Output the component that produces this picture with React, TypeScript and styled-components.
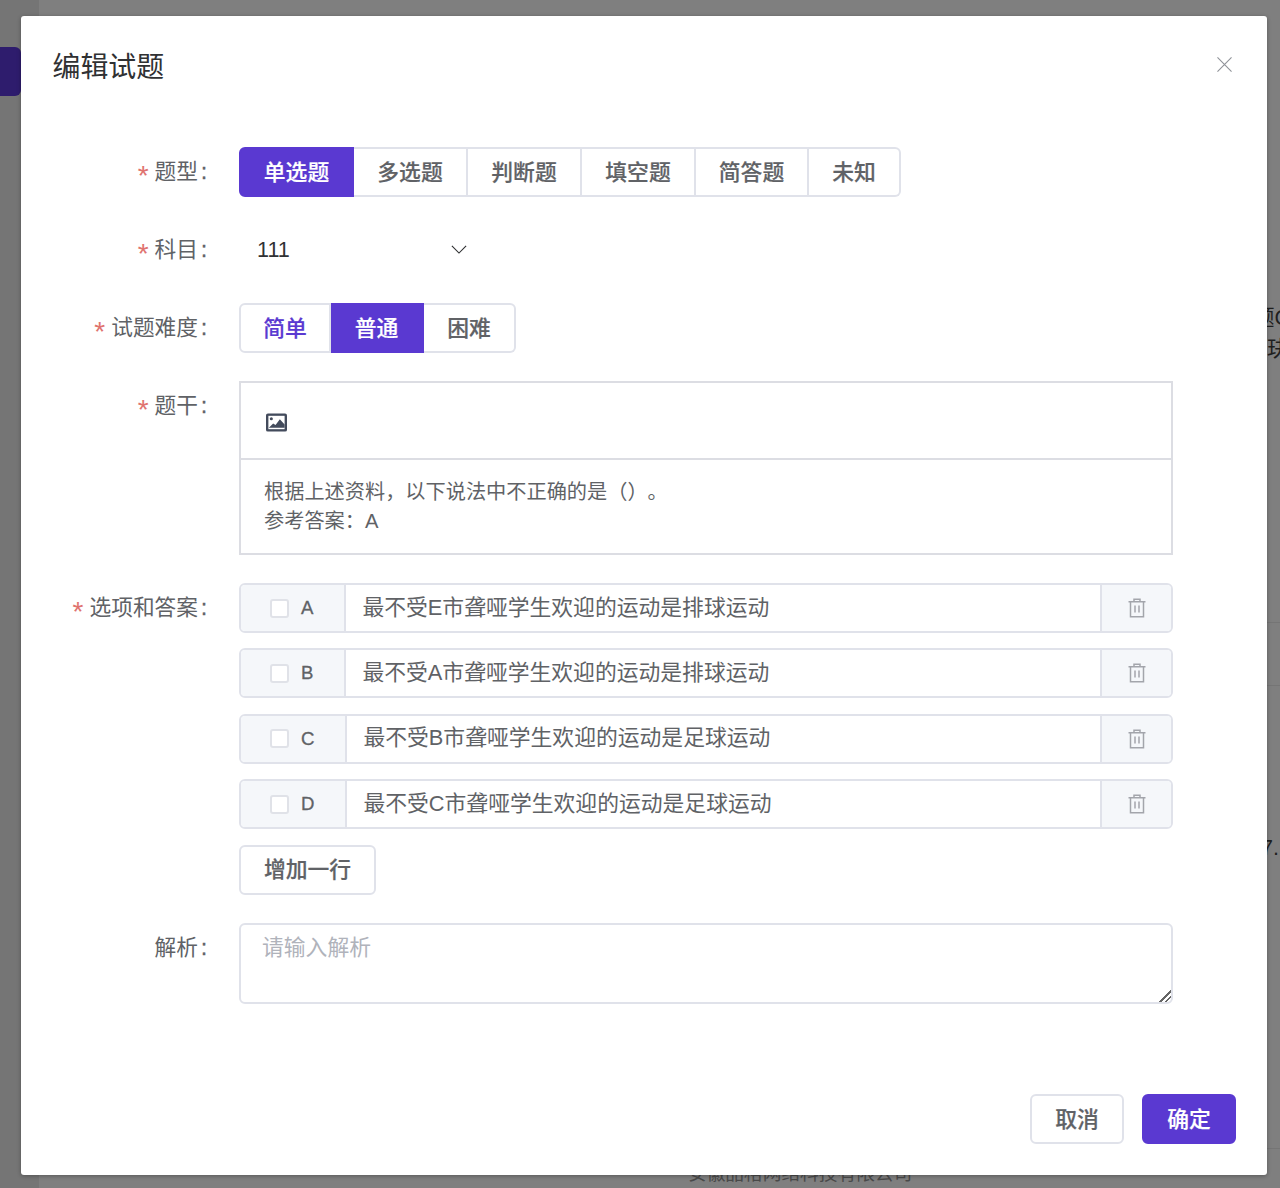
import React from "react";
import styled, { createGlobalStyle } from "styled-components";

const Global = createGlobalStyle`
  html, body { margin: 0; padding: 0; background: #7f7f7f; }
  * { box-sizing: border-box; }
  body {
    font-family: "Liberation Sans", "Noto Sans CJK SC", sans-serif;
    text-spacing-trim: space-all;
  }
`;

const line = "#e0e2ea";
const purple = "#5a39d1";
const fontStack = `"Liberation Sans", "Noto Sans CJK SC", sans-serif`;

const Page = styled.div`
  position: relative;
  width: 1280px;
  height: 1188px;
  overflow: hidden;
  background: #7f7f7f;
`;
const SideRail = styled.div`
  position: absolute;
  left: 0;
  top: 0;
  bottom: 0;
  width: 39px;
  background: #757575;
`;
const SideTab = styled.div`
  position: absolute;
  left: 0;
  top: 47px;
  width: 21px;
  height: 49px;
  border-radius: 0 6px 6px 0;
  background: #2e1c6d;
`;
const BackText = styled.div<{ $x: number; $y: number }>`
  position: absolute;
  left: ${(p) => p.$x}px;
  top: ${(p) => p.$y}px;
  font-size: 21.6px;
  line-height: 26px;
  color: #1f1f1f;
  white-space: nowrap;
`;
const Footnote = styled.div`
  position: absolute;
  left: 688px;
  top: 1161px;
  font-size: 18.7px;
  line-height: 26px;
  color: #4a4a4a;
  white-space: nowrap;
`;
const RuleLine = styled.div<{ $y: number }>`
  position: absolute;
  right: 0;
  width: 13px;
  top: ${(p) => p.$y}px;
  height: 1px;
  background: #757575;
`;

const Modal = styled.div`
  position: absolute;
  left: 21px;
  top: 16px;
  width: 1246px;
  height: 1159px;
  background: #fff;
  border-radius: 3px;
  box-shadow: 0 1px 4px rgba(0, 0, 0, 0.3);
  display: flex;
  flex-direction: column;
`;
const Header = styled.div`
  display: flex;
  align-items: flex-start;
  justify-content: space-between;
  padding: 32px 35px 0 31.5px;
  height: 131px;
`;
const Title = styled.h2`
  margin: 0;
  font-size: 27.9px;
  line-height: 40px;
  font-weight: 400;
  color: #303133;
`;
const CloseButton = styled.button`
  border: 0;
  background: none;
  padding: 0;
  margin-top: 9px;
  width: 15px;
  height: 15px;
  display: block;
`;
const Form = styled.div`
  display: flex;
  flex-direction: column;
  gap: 28px;
  padding-right: 94px;
  flex: 1;
`;
const Row = styled.div`
  display: grid;
  grid-template-columns: 218px 934px;
`;
const Label = styled.div`
  display: flex;
  justify-content: flex-end;
  padding-right: 32px;
  font-size: 21.7px;
  line-height: 50px;
  height: 50px;
  color: #606266;
  white-space: nowrap;
`;
const Star = styled.span`
  color: #e0736f;
  margin-right: 6px;
  font-size: 28px;
  line-height: 57px;
  height: 50px;
`;
const Colon = styled.span`
  margin-left: 3px;
  -webkit-text-stroke: 0.4px currentColor;
`;
const Segments = styled.div`
  display: flex;
  height: 50px;
`;
const Segment = styled.button<{ $active?: boolean; $accent?: boolean; $w: number }>`
  width: ${(p) => p.$w}px;
  height: 50px;
  padding: 1px 0 0;
  font: 500 21.8px/44px ${fontStack};
  -webkit-text-stroke: 0.2px currentColor;
  background: ${(p) => (p.$active ? purple : "#fff")};
  color: ${(p) => (p.$active ? "#fff" : p.$accent ? purple : "#606266")};
  border: 2px solid ${(p) => (p.$active ? purple : line)};
  border-left-width: 0;
  &:first-child {
    border-left-width: 2px;
    border-radius: 6px 0 0 6px;
  }
  &:last-child {
    border-radius: 0 6px 6px 0;
  }
`;
const SelectBox = styled.div`
  width: 246px;
  height: 50px;
  display: flex;
  align-items: center;
  justify-content: space-between;
  padding: 0 18px;
  font-size: 21.6px;
  color: #303133;
`;
const Chevron = styled.svg`
  margin-bottom: 2px;
`;
const Editor = styled.div`
  border: 2px solid #dcdde3;
  height: 174px;
  display: flex;
  flex-direction: column;
`;
const EditorToolbar = styled.div`
  height: 77px;
  flex: none;
  border-bottom: 2px solid #dcdde3;
  display: flex;
  align-items: center;
  padding: 3px 0 0 25px;
`;
const EditorBody = styled.div`
  padding: 18px 23px 0;
  font-size: 20.2px;
  line-height: 29px;
  color: #606266;
`;
const Options = styled.div`
  display: flex;
  flex-direction: column;
  gap: 15.4px;
`;
const OptionRow = styled.div`
  display: flex;
  height: 50px;
  border: 2px solid ${line};
  border-radius: 6px;
  overflow: hidden;
`;
const OptionKey = styled.label`
  display: flex;
  align-items: center;
  gap: 12px;
  padding: 0 31px 0 29px;
  background: #f5f7fa;
  border-right: 2px solid ${line};
  font-size: 18.6px;
  -webkit-text-stroke: 0.3px currentColor;
  color: #606266;
`;
const Check = styled.span`
  width: 19px;
  height: 19px;
  border: 2px solid #e0e2e8;
  border-radius: 3px;
  background: #fff;
`;
const OptionInput = styled.input`
  flex: 1;
  min-width: 0;
  border: 0;
  outline: 0;
  padding: 0 16px 1px;
  font: 400 21.8px/30px ${fontStack};
  color: #606266;
  background: #fff;
`;
const DeleteCell = styled.div`
  width: 71px;
  display: flex;
  align-items: center;
  justify-content: center;
  background: #f5f7fa;
  border-left: 2px solid ${line};
`;
const AddButton = styled.button`
  align-self: flex-start;
  width: 137px;
  height: 50px;
  padding: 1px 0 0;
  background: #fff;
  border: 2px solid ${line};
  border-radius: 6px;
  font: 500 21.8px/44px ${fontStack};
  -webkit-text-stroke: 0.2px currentColor;
  color: #606266;
`;
const Textarea = styled.textarea`
  display: block;
  width: 934px;
  height: 81px;
  padding: 8px 21px;
  border: 2px solid ${line};
  border-radius: 6px;
  outline: 0;
  font: 400 21.8px/30px ${fontStack};
  color: #606266;
  &::placeholder {
    color: #b0b3bb;
  }
  &::-webkit-resizer {
    background: linear-gradient(
      135deg,
      transparent 0 60%,
      #666 60% 67%,
      transparent 67% 79%,
      #666 79% 86%,
      transparent 86%
    );
  }
`;
const Footer = styled.div`
  display: flex;
  justify-content: flex-end;
  gap: 18px;
  padding: 0 31px 31px 0;
`;
const FooterButton = styled.button<{ $primary?: boolean }>`
  width: 94px;
  height: 50px;
  padding: 1px 0 0;
  border-radius: 6px;
  font: 500 21.8px/44px ${fontStack};
  -webkit-text-stroke: 0.2px currentColor;
  background: ${(p) => (p.$primary ? purple : "#fff")};
  color: ${(p) => (p.$primary ? "#fff" : "#606266")};
  border: 2px solid ${(p) => (p.$primary ? purple : line)};
`;

const TrashIcon = () => (
  <svg width="20" height="20" viewBox="0 0 20 20" fill="none" stroke="#a3a5ab" strokeWidth="1.5">
    <path d="M1.500 3.700h17" />
    <path d="M7 3.500V1.200h6v2.300" />
    <path d="M3.500 3.700v15h13v-15" />
    <path d="M8 7.500v7M12 7.500v7" />
  </svg>
);

const ImageIcon = () => (
  <svg width="21" height="19" viewBox="0 0 22 19">
    <rect width="22" height="19" rx="2" fill="#434b5c" />
    <rect x="2.500" y="2.500" width="17" height="14" fill="#fff" />
    <circle cx="5.600" cy="5.600" r="1.600" fill="#434b5c" />
    <path d="M3 15l4.500-4.500 2.500 1.500 4.500-6 5 5.500V15z" fill="#434b5c" />
  </svg>
);

const options = [
  ["A", "最不受E市聋哑学生欢迎的运动是排球运动"],
  ["B", "最不受A市聋哑学生欢迎的运动是排球运动"],
  ["C", "最不受B市聋哑学生欢迎的运动是足球运动"],
  ["D", "最不受C市聋哑学生欢迎的运动是足球运动"],
];

const types: [string, number][] = [
  ["单选题", 115],
  ["多选题", 114],
  ["判断题", 114],
  ["填空题", 114],
  ["简答题", 113],
  ["未知", 92],
];
const levels: [string, number][] = [
  ["简单", 92],
  ["普通", 93],
  ["困难", 92],
];

export default function App() {
  return (
    <Page>
      <Global />
      <SideRail />
      <SideTab />
      <BackText $x={1253} $y={305}>题C</BackText>
      <BackText $x={1267} $y={336}>玦</BackText>
      <BackText $x={1261} $y={835}>7.</BackText>
      <RuleLine $y={622} />
      <RuleLine $y={685} />
      <RuleLine $y={1148} />
      <Footnote>安徽品格网络科技有限公司</Footnote>
      <Modal>
        <Header>
          <Title>编辑试题</Title>
          <CloseButton aria-label="关闭">
            <svg width="15" height="15" viewBox="0 0 16 16" stroke="#909399" strokeWidth="1.2">
              <path d="M.5.5l15 15M15.500.5l-15 15" />
            </svg>
          </CloseButton>
        </Header>
        <Form>
          <Row>
            <Label><Star>*</Star>题型<Colon>:</Colon></Label>
            <Segments>
              {types.map(([t, w], i) => (
                <Segment key={t} $w={w} $active={i === 0}>{t}</Segment>
              ))}
            </Segments>
          </Row>
          <Row>
            <Label><Star>*</Star>科目<Colon>:</Colon></Label>
            <SelectBox>
              111
              <Chevron width="16" height="9" viewBox="0 0 18 10" fill="none" stroke="#303133" strokeWidth="1.3">
                <path d="M1 1l8 8 8-8" />
              </Chevron>
            </SelectBox>
          </Row>
          <Row>
            <Label><Star>*</Star>试题难度<Colon>:</Colon></Label>
            <Segments>
              {levels.map(([t, w], i) => (
                <Segment key={t} $w={w} $active={i === 1} $accent={i === 0}>{t}</Segment>
              ))}
            </Segments>
          </Row>
          <Row>
            <Label><Star>*</Star>题干<Colon>:</Colon></Label>
            <Editor>
              <EditorToolbar><ImageIcon /></EditorToolbar>
              <EditorBody>
                根据上述资料，以下说法中不正确的是（）。
                <br />
                参考答案：A
              </EditorBody>
            </Editor>
          </Row>
          <Row>
            <Label><Star>*</Star>选项和答案<Colon>:</Colon></Label>
            <Options>
              {options.map(([k, v]) => (
                <OptionRow key={k}>
                  <OptionKey><Check />{k}</OptionKey>
                  <OptionInput readOnly value={v} />
                  <DeleteCell><TrashIcon /></DeleteCell>
                </OptionRow>
              ))}
              <AddButton>增加一行</AddButton>
            </Options>
          </Row>
          <Row>
            <Label>解析<Colon>:</Colon></Label>
            <Textarea placeholder="请输入解析" />
          </Row>
        </Form>
        <Footer>
          <FooterButton>取消</FooterButton>
          <FooterButton $primary>确定</FooterButton>
        </Footer>
      </Modal>
    </Page>
  );
}
